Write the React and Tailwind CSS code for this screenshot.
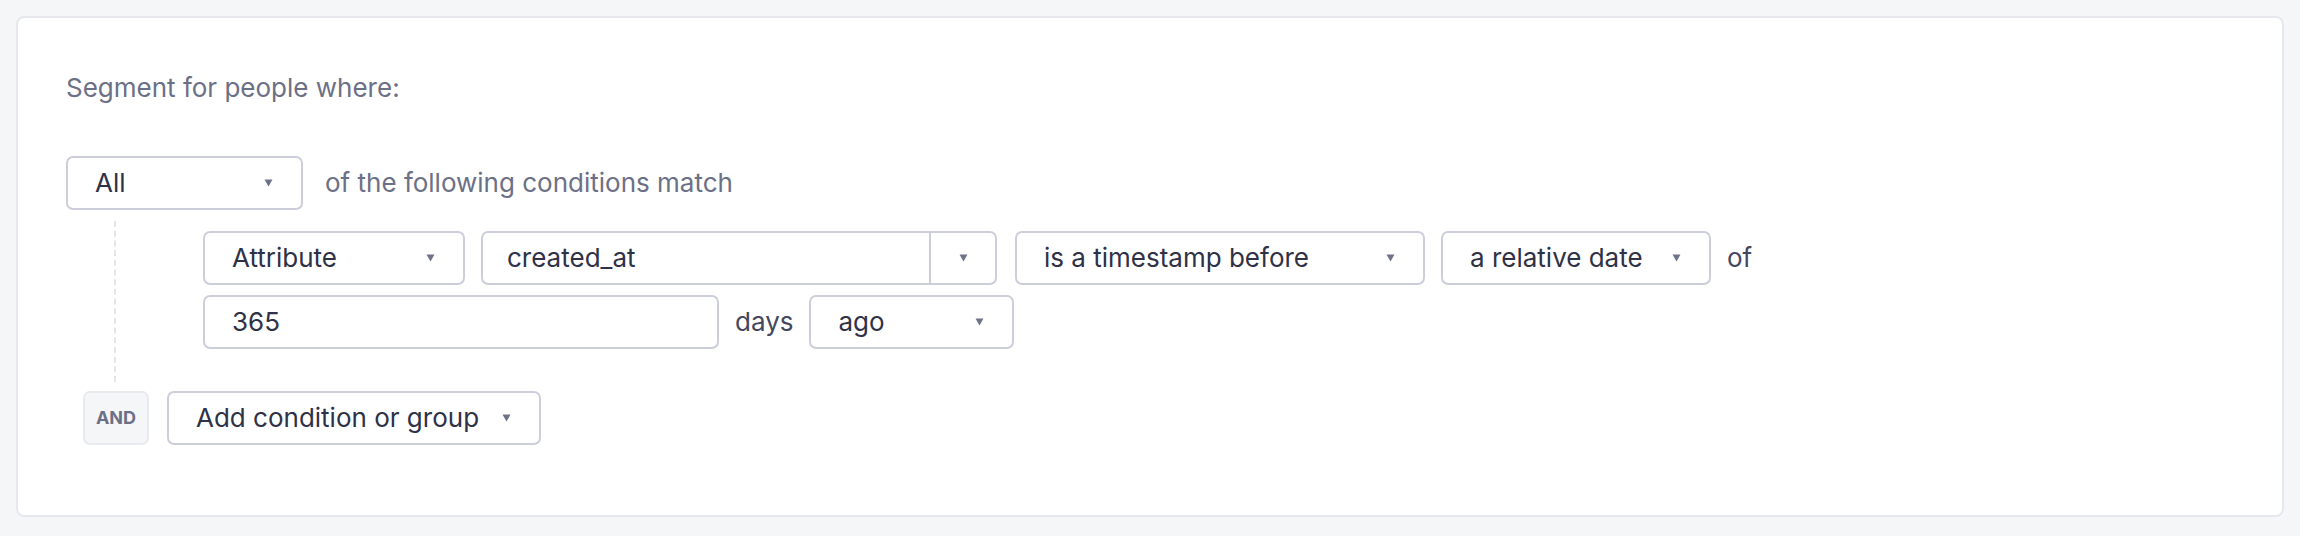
import React from 'react';

// little grey triangle used on every select
function Caret() {
  return (
    <svg width="9" height="8" viewBox="0 0 9 8" className="shrink-0">
      <path d="M0.5 0.5 H8.5 L4.5 7.5 Z" fill="#6e7287" />
    </svg>
  );
}

function Select({ label, width }) {
  return (
    <div
      className={`flex items-center justify-between h-[54px] pl-[27px] pr-[28px] bg-white border-2 border-[#cdcedb] rounded-[7px] text-[#2f3146] ${width}`}
    >
      <span className="whitespace-nowrap">{label}</span>
      <Caret />
    </div>
  );
}

export default function App() {
  return (
    <div
      className="h-screen overflow-hidden bg-[#f5f6f8] pt-[16px] pl-[16px] pr-[16px]"
      style={{ fontFamily: 'Inter, "Noto Sans", sans-serif' }}
    >
      <div className="bg-white border-2 border-[#e7e8ed] rounded-[8px] h-[501px] pl-[48px] pt-[52px] text-[26px] leading-[36px]">
        <p className="text-[#6c7086]">Segment for people where:</p>

        <div className="mt-[50px]">
          <div className="flex items-center gap-[22px]">
            <Select label="All" width="w-[237px]" />
            <span className="text-[#6c7086]">of the following conditions match</span>
          </div>

          <div className="mt-[11px] ml-[48px] border-l-2 border-dashed border-[#e4e5eb] pt-[10px] pb-[33px] pl-[87px]">
            <div className="flex items-center gap-4">
              <Select label="Attribute" width="w-[262px]" />
              <div className="flex h-[54px] w-[516px] border-2 border-[#cdcedb] rounded-[7px] text-[#2f3146]">
                <div className="flex-1 flex items-center pl-[24px]">created_at</div>
                <div className="w-[66px] flex items-center justify-center border-l-2 border-[#cdcedb]">
                  <Caret />
                </div>
              </div>
              <div className="ml-[2px]">
                <Select label="is a timestamp before" width="w-[410px]" />
              </div>
              <Select label="a relative date" width="w-[270px]" />
              <span className="text-[#44475d]">of</span>
            </div>

            <div className="flex items-center gap-4 mt-[10px]">
              <div className="flex items-center h-[54px] w-[516px] pl-[27px] border-2 border-[#cdcedb] rounded-[7px] text-[#2f3146]">
                365
              </div>
              <span className="text-[#44475d]">days</span>
              <Select label="ago" width="w-[205px]" />
            </div>
          </div>

          <div className="flex items-center gap-[18px] mt-[9px] ml-[17px]">
            <div className="flex items-center justify-center w-[66px] h-[54px] bg-[#f5f6f8] border-2 border-[#e9eaef] rounded-[7px] text-[18px] font-bold text-[#6c7086]">
              AND
            </div>
            <Select label="Add condition or group" width="w-[374px]" />
          </div>
        </div>
      </div>
    </div>
  );
}
